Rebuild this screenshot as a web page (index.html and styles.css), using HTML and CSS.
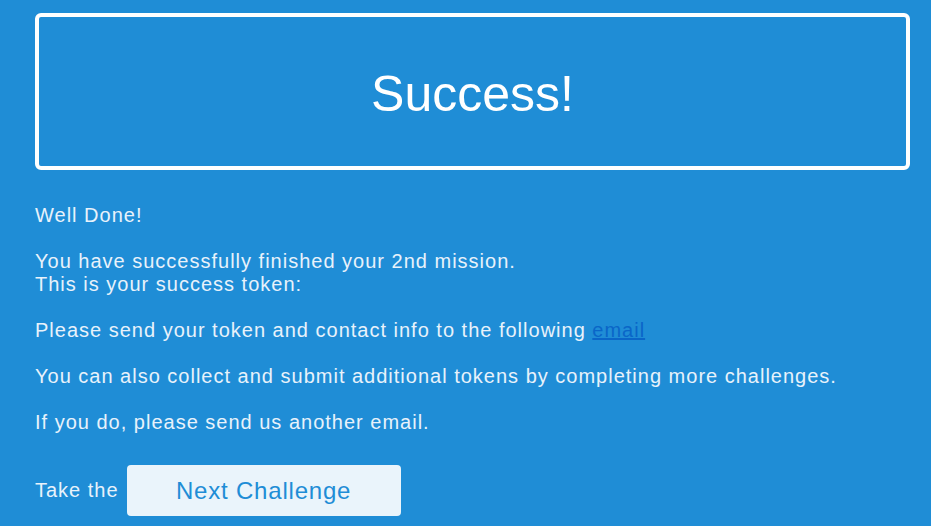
FILE: index.html
```html
<!DOCTYPE html>
<html>
<head>
<meta charset="utf-8">
<link rel="stylesheet" href="styles.css">
</head>
<body>
<div class="page">
  <div class="banner"><h1 class="title">Success!</h1></div>
  <div class="content">
    <p>Well Done!</p>
    <p>You have successfully finished your 2nd mission.<br>This is your success token:</p>
    <p>Please send your token and contact info to the following <a href="#" class="link">email</a></p>
    <p>You can also collect and submit additional tokens by completing more challenges.</p>
    <p>If you do, please send us another email.</p>
    <div class="next">
      <span>Take the</span>
      <button class="btn">Next Challenge</button>
    </div>
  </div>
</div>
</body>
</html>
```
FILE: styles.css
```css
html, body {
  margin: 0;
  padding: 0;
  background: #1f8dd6;
}
body {
  font-family: "Liberation Sans", Arial, sans-serif;
  color: #e8f2fb;
}
.page {
  padding: 13px 21px 0 35px;
}
.banner {
  height: 149px;
  border: 4px solid #ffffff;
  border-radius: 6px;
  display: flex;
  align-items: center;
  justify-content: center;
}
.title {
  margin: 0;
  padding-top: 4px;
  font-weight: normal;
  font-size: 50px;
  color: #ffffff;
}
.content {
  padding-top: 34px;
  font-size: 20px;
  line-height: 23px;
  letter-spacing: 1px;
}
.content p {
  margin: 0 0 23px 0;
}
.link {
  color: #0a66c8;
}
.next {
  display: flex;
  align-items: center;
  gap: 8px;
  margin-top: 31px;
}
.btn {
  width: 274px;
  height: 51px;
  border: none;
  border-radius: 4px;
  background: #eaf4fb;
  color: #1f8dd6;
  font-family: "Liberation Sans", Arial, sans-serif;
  font-size: 24px;
  letter-spacing: 0.8px;
  padding: 0;
}
```
